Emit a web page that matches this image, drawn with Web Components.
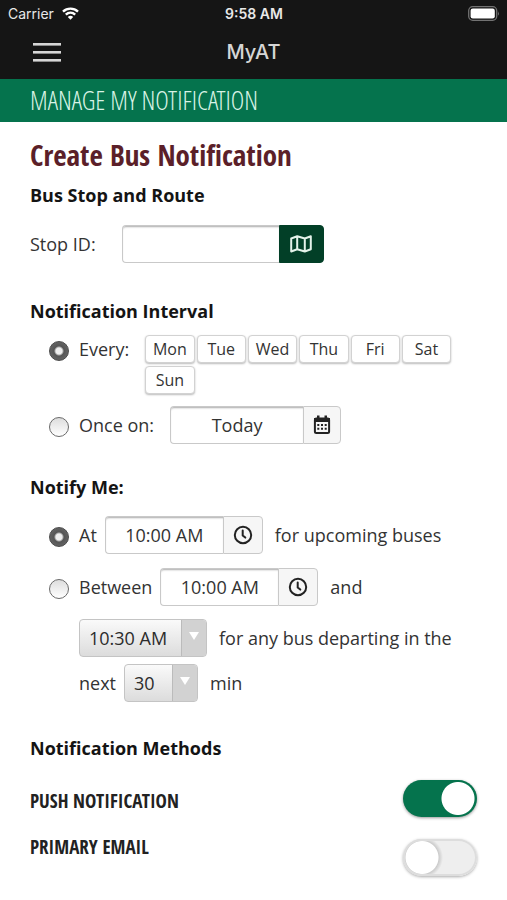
<!DOCTYPE html>
<html lang="en">
<head>
<meta charset="utf-8">
<meta name="viewport" content="width=device-width, initial-scale=1">
<title>MyAT – Manage My Notification</title>
<style>
  html { background: #fff; }
  body {
    margin: 0;
    font: 18px/24px "Open Sans", "Noto Sans", sans-serif;
    color: #333;
    --green: #05734d;
    --green-dark: #023f27;
    --ink: #141414;
    --bar: #151515;
    --line: #c9c9c9;
    --gutter: 30px;
    --condensed: "Open Sans Condensed", "Noto Sans Condensed", "Liberation Sans Narrow", "Open Sans", sans-serif;
    --condensed-light: "Open Sans Condensed Light", "Open Sans Light Condensed", "OpenSans-CondensedLight", "Noto Sans Condensed Light", "Noto Sans ExtraCondensed Light", "Liberation Sans Narrow", sans-serif;
  }
</style>
</head>
<body>
<at-app></at-app>

<script>
const define = (name, html, setup) => {
  const template = document.createElement('template');
  template.innerHTML = `<style>*{box-sizing:border-box}:host{box-sizing:border-box}</style>${html}`;
  customElements.define(name, class extends HTMLElement {
    connectedCallback() {
      if (this.shadowRoot) return;
      this.attachShadow({ mode: 'open' }).append(template.content.cloneNode(true));
      if (setup) setup(this, this.shadowRoot);
    }
  });
};

define('at-icon', `
  <style>
    :host { display: inline-flex; width: 24px; height: 24px; }
    svg { display: none; width: 100%; height: 100%; fill: none; stroke: currentColor; stroke-width: 2; stroke-linejoin: round; stroke-linecap: round; }
    :host([name=map]) .map, :host([name=calendar]) .calendar, :host([name=clock]) .clock { display: block; }
    .solid { fill: currentColor; stroke: none; }
  </style>
  <svg class="map" viewBox="0 0 24 24" aria-hidden="true"><path d="M2.200 6.500l6-2.300 7.600 2.300 6-2.300v13L15.800 19.500l-7.600-2.300-6 2.300zM8.200 4.200v13M15.800 6.500v13"/></svg>
  <svg class="calendar" viewBox="0 0 24 24" aria-hidden="true">
    <rect x="4.900" y="5.500" width="14.200" height="14.500" rx="1.500"/>
    <path class="solid" d="M4 5h16v4H4zM7 2.500h2.500V6H7zM14.500 2.500H17V6h-2.500z"/>
    <path class="solid" d="M7.300 11h2v2h-2zM11 11h2v2h-2zM14.700 11h2v2h-2zM7.300 14.800h2v2h-2zM11 14.800h2v2h-2zM14.700 14.800h2v2h-2z"/>
  </svg>
  <svg class="clock" viewBox="0 0 24 24" aria-hidden="true"><circle cx="12" cy="12" r="8.200"/><path d="M11.700 7.500v4.900l2.600 2.200"/></svg>
`);

define('status-bar', `
  <style>
    :host { display: grid; grid-template-columns: 1fr auto 1fr; align-items: center; height: 27px; padding: 0 7px 0 8px;
      font: 14px/20px Inter, "Liberation Sans", sans-serif; color: #e8e8e8; }
    .carrier { display: flex; align-items: center; gap: 8px; }
    time { font-weight: 600; }
    .battery { justify-self: end; display: block; }
  </style>
  <span class="carrier">Carrier
    <svg width="17" height="13" viewBox="0 0 17 13" fill="none" stroke="#fff" stroke-width="2.400" aria-hidden="true">
      <path d="M1 4.600C5.200.600 11.800.600 16 4.600M3.800 7.600c2.700-2.500 6.700-2.500 9.400 0"/><path d="M5.800 10a4 4 0 0 1 5.400 0L8.500 12.800z" fill="#fff" stroke="none"/>
    </svg>
  </span>
  <time>9:58 AM</time>
  <svg class="battery" width="32" height="15" viewBox="0 0 32 15" aria-hidden="true">
    <rect x=".700" y=".700" width="28" height="13.600" rx="4" fill="none" stroke="#727272" stroke-width="1.300"/>
    <rect x="2.600" y="2.600" width="24.200" height="9.800" rx="2.200" fill="#fff"/>
    <path d="M30 5.200q1.800 2.300 0 4.600z" fill="#727272"/>
  </svg>
`);

define('nav-bar', `
  <style>
    :host { display: grid; grid-template-columns: 1fr auto 1fr; align-items: center; height: 52px; padding: 0 var(--gutter) 2px; color: #d6d6d6; }
    button { justify-self: start; display: flex; flex-direction: column; gap: 6px; margin: 0; padding: 0 3px; border: 0; background: none; }
    i { display: block; width: 28px; height: 2px; background: #d6d6d6; box-shadow: 0 1px #8a8a8a; }
    h1 { margin: 0; font: 500 20px/24px Inter, "Liberation Sans", sans-serif; }
  </style>
  <button type="button" aria-label="Open menu"><i></i><i></i><i></i></button>
  <h1>MyAT</h1>
`);

define('page-banner', `
  <style>
    :host { display: block; padding: 7px var(--gutter) 8px; background: var(--green); color: #d9f3e6; }
    h2 { margin: 0; font: 300 26px/28px var(--condensed-light); text-transform: uppercase; }
  </style>
  <h2><slot></slot></h2>
`);

define('form-section', `
  <style>
    :host { display: block; }
    h3 { margin: 0; font-size: 18px; line-height: 24px; font-weight: 700; color: var(--ink); }
  </style>
  <h3></h3><slot></slot>
`, (host, root) => { root.querySelector('h3').textContent = host.getAttribute('heading'); });

define('icon-field', `
  <style>
    :host { display: flex; height: 38px; flex: none; }
    input { width: 100%; min-width: 0; flex: 1; margin: 0; padding: 0 4px; border: 1px solid var(--line); border-right: 0; border-radius: 4px 0 0 4px;
      background: #fff; box-shadow: inset 0 2px 2px -1px #aaa; font: inherit; color: inherit; text-align: center; outline: 0; }
    button { flex: none; display: flex; align-items: center; justify-content: center; width: 40px; margin: 0; padding: 0; border: 1px solid var(--line);
      border-radius: 0 4px 4px 0; background: #f6f6f6; color: #222; }
    :host([icon=calendar]) button { width: 38px; }
    :host([solid]) button { width: 45px; background: var(--green-dark); border-color: var(--green-dark); color: #e4f3ea; }
  </style>
  <input type="text"><button type="button"><at-icon></at-icon></button>
`, (host, root) => {
  const input = root.querySelector('input');
  input.value = host.getAttribute('value') || '';
  input.setAttribute('aria-label', host.getAttribute('label'));
  root.querySelector('button').setAttribute('aria-label', host.getAttribute('action'));
  root.querySelector('at-icon').setAttribute('name', host.getAttribute('icon'));
});

define('drop-down', `
  <style>
    :host { display: grid; grid-template-columns: 1fr 25px; flex: none; height: 38px; border: 1px solid #c4c4c4; border-radius: 4px; overflow: hidden;
      background: linear-gradient(#fafafa, #dcdcdc); }
    select { grid-area: 1 / 1 / 2 / 3; width: 100%; height: 100%; margin: 0; padding: 0 25px 0 9px; border: 0; background: none; appearance: none; font: inherit; color: #2c2c2c; outline: 0; }
    span { grid-area: 1 / 2; display: flex; justify-content: center; align-items: center; padding-bottom: 4px; border-left: 1px solid #bbb; background: #d2d2d2; pointer-events: none; }
    svg { display: block; }
  </style>
  <select><option></option></select>
  <span><svg width="10" height="8" viewBox="0 0 10 8" aria-hidden="true"><path d="M0 0h10L5 8z" fill="#fff"/></svg></span>
`, (host, root) => {
  root.querySelector('option').textContent = host.getAttribute('value');
  root.querySelector('select').setAttribute('aria-label', host.getAttribute('label'));
});

define('day-picker', `
  <style>
    :host { display: grid; grid-template-columns: repeat(6, 1fr); gap: 3px 2px; flex: 1; max-width: 306px; }
    button { height: 28px; margin: 0; padding: 0; border: 1px solid #d2d2d2; border-radius: 4px; background: #fff; box-shadow: 0 1px 2px #bbb;
      font: inherit; font-size: 16px; line-height: 24px; color: #333; }
  </style>
`, (host, root) => {
  for (const day of ['Mon', 'Tue', 'Wed', 'Thu', 'Fri', 'Sat', 'Sun']) {
    const b = document.createElement('button');
    b.type = 'button';
    b.textContent = day;
    b.setAttribute('aria-pressed', 'false');
    root.append(b);
  }
});

const choiceStyle = `
  <style>
    :host { display: flex; flex-direction: column; padding-left: 19px; }
    .choice { display: grid; grid-template-columns: 20px 1fr; column-gap: 10px; align-items: start; }
    .line { display: flex; align-items: center; min-height: 38px; gap: 12px; }
    .line > label, .line > .lead { margin-right: -4px; }
    label, span { white-space: nowrap; }
    input[type=radio] { appearance: none; width: 20px; height: 20px; margin: 11px 0 0; border: 1px solid #6a6a6a; border-radius: 50%;
      background: linear-gradient(#ddd, #fff); }
    input[type=radio]:checked { border-color: #4a4a4a; background: radial-gradient(circle, #eee 0 3px, #aaa 4px, #555 5px, #666 10px); }
  </style>`;

define('stop-field', `
  <style>
    :host { display: flex; align-items: center; gap: 26px; }
    icon-field { width: 202px; }
  </style>
  <span>Stop ID:</span>
  <icon-field solid label="Stop ID" action="Choose a stop on the map" icon="map"></icon-field>
`);

define('interval-choice', `${choiceStyle}
  <style>
    :host { gap: 12px; }
    .days { align-items: start; gap: 20px; }
    .days > label { line-height: 28px; }
    .days-choice input[type=radio] { margin-top: 6px; }
    .once { gap: 20px; }
    icon-field { width: 171px; }
  </style>
  <div class="choice days-choice">
    <input type="radio" name="interval" id="every" checked>
    <div class="line days"><label for="every">Every:</label><day-picker></day-picker></div>
  </div>
  <div class="choice">
    <input type="radio" name="interval" id="once">
    <div class="line once"><label for="once">Once on:</label>
      <icon-field value="Today" label="Date" action="Pick a date" icon="calendar"></icon-field></div>
  </div>
`);

define('notify-choice', `${choiceStyle}
  <style>
    :host { gap: 14px; }
    icon-field { width: 158px; }
    .lines { display: flex; flex-direction: column; }
    .lines .line:nth-child(2) { margin: 13px 0 7px; }
    .time { width: 128px; }
    .minutes { width: 74px; }
  </style>
  <div class="choice">
    <input type="radio" name="when" id="at" checked>
    <div class="line"><label for="at">At</label>
      <icon-field value="10:00 AM" label="Time" action="Pick a time" icon="clock"></icon-field>
      <span>for upcoming buses</span></div>
  </div>
  <div class="choice">
    <input type="radio" name="when" id="between">
    <div class="lines">
      <div class="line"><label for="between">Between</label>
        <icon-field value="10:00 AM" label="Start time" action="Pick a start time" icon="clock"></icon-field>
        <span>and</span></div>
      <div class="line"><drop-down class="time" value="10:30 AM" label="End time"></drop-down><span>for any bus departing in the</span></div>
      <div class="line"><span class="lead">next</span><drop-down class="minutes" value="30" label="Minutes"></drop-down><span>min</span></div>
    </div>
  </div>
`);

define('method-list', `
  <style>
    :host { display: flex; justify-content: space-between; }
    .names, .switches { display: flex; flex-direction: column; gap: 22px; }
    .names { padding-top: 9px; }
    label { font: 700 19px/24px var(--condensed); text-transform: uppercase; color: #222; }
    input { appearance: none; display: block; width: 74px; height: 37px; margin: 0; border-radius: 19px;
      background: radial-gradient(circle at 19px 50%, #fff 0 16px, #ccc 17px, #eee 21px); box-shadow: inset 0 0 0 2px #ddd, 0 1px 3px #aaa; }
    input:checked { background: radial-gradient(circle at 55px 50%, #fff 0 16px, #0000 17px), var(--green); box-shadow: 0 1px 3px #999; }
  </style>
  <div class="names"><label for="push">Push Notification</label><label for="email">Primary Email</label></div>
  <div class="switches"><input type="checkbox" role="switch" id="push" checked><input type="checkbox" role="switch" id="email"></div>
`);

define('at-app', `
  <style>
    :host { display: block; }
    header { background: var(--bar); }
    main { padding: 15px var(--gutter) 20px; }
    h2 { margin: 0 0 10px; font: 700 29px/36px var(--condensed); color: #5b1f29; }
    form-section + form-section { margin-top: 31px; }
    stop-field { margin: 18px 0 36px; }
    interval-choice { margin-top: 12px; }
    notify-choice { margin: 17px 0 34px; }
    method-list { margin-top: 20px; }
    form-section:nth-of-type(2), form-section:nth-of-type(4) { margin-top: 0; }
  </style>
  <header><status-bar></status-bar><nav-bar></nav-bar></header>
  <page-banner>Manage My Notification</page-banner>
  <main>
    <h2>Create Bus Notification</h2>
    <form-section heading="Bus Stop and Route"><stop-field></stop-field></form-section>
    <form-section heading="Notification Interval"><interval-choice></interval-choice></form-section>
    <form-section heading="Notify Me:"><notify-choice></notify-choice></form-section>
    <form-section heading="Notification Methods"><method-list></method-list></form-section>
  </main>
`);
</script>
</body>
</html>
